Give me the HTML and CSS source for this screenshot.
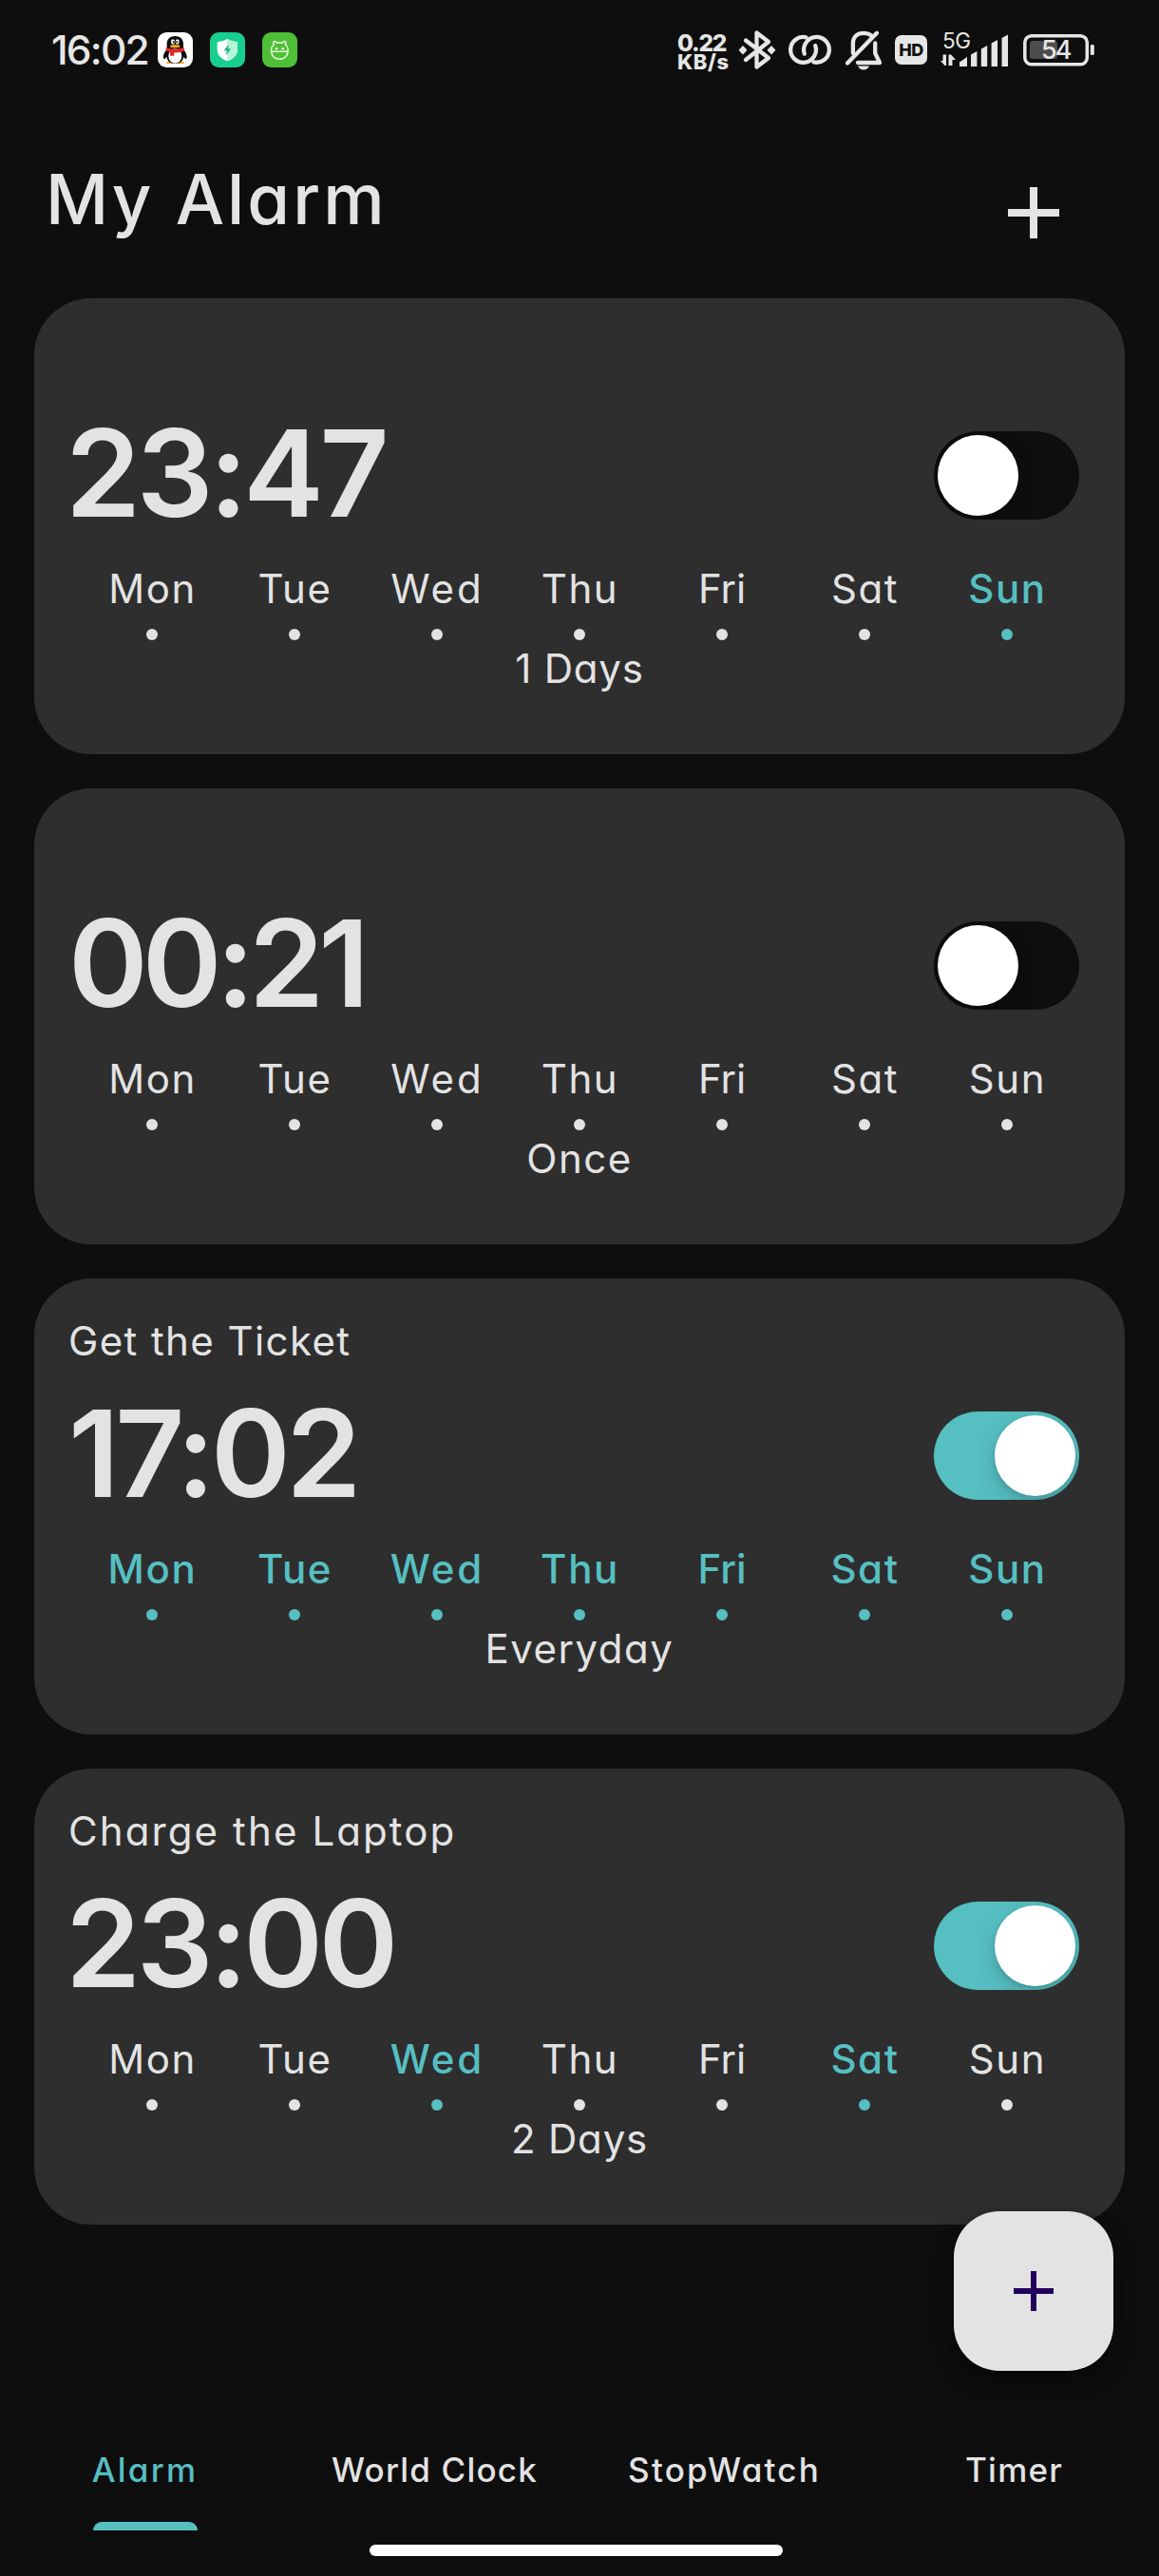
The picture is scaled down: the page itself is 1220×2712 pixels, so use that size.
FILE: index.html
```html
<!DOCTYPE html>
<html lang="en">
<head>
<meta charset="utf-8">
<title>My Alarm</title>
<link rel="stylesheet" href="styles.css">
</head>
<body>
<div class="screen">
  <div class="status">
    <span class="status-time">16:02</span>
    <svg class="app-icon" viewBox="0 0 111 111">
      <rect width="111" height="111" rx="28" fill="#fff"/>
      <path d="M27 95q8-8 24-3l3 7H28zM83 95q-8-8-24-3l-3 7h27z" fill="#f5a623"/>
      <path d="M29 54C18 66 15 80 20 84c3 1 6-4 8-7 2 14 12 22 27 22s25-8 27-22c2 3 5 8 8 7 5-4 2-18-9-30V38C81 20 70 12 55 12S29 20 29 38z" fill="#0b0b0b"/>
      <ellipse cx="55" cy="75" rx="21" ry="23" fill="#fff"/>
      <ellipse cx="48" cy="30" rx="6" ry="8" fill="#fff"/><ellipse cx="62" cy="30" rx="6" ry="8" fill="#fff"/>
      <circle cx="50" cy="31" r="3"/><circle cx="61" cy="31" r="3"/>
      <ellipse cx="55" cy="44" rx="16" ry="5" fill="#f5a623"/>
      <path d="M26 47q29 11 57 0l1 12q-13 6-32 5v10H39V62q-8-1-13-4z" fill="#e02b2b"/>
    </svg>
    <svg class="app-icon" viewBox="0 0 111 111">
      <rect width="111" height="111" rx="28" fill="#19cf90"/>
      <path d="M55 21q16 10 32 10v24c0 19-15 30-32 36-17-6-32-17-32-36V31q16 0 32-10z" fill="#fff"/>
      <path d="M55 21q16 10 32 10v24c0 19-15 30-32 36z" fill="#b5f5d8"/>
      <path d="M59 38 44 58h9l-2 15 15-21h-9z" fill="#19b582"/>
    </svg>
    <svg class="app-icon" viewBox="0 0 111 111">
      <rect width="111" height="111" rx="28" fill="#4fbf38"/>
      <g fill="none" stroke="#e6ffd8" stroke-width="4.5" stroke-linecap="round" stroke-linejoin="round">
        <path d="M29 61q-2-14 8-22-4-7 1-10 5-1 8 5 9-3 18 0 3-6 8-5 5 3 1 10 10 8 8 22a26 24 0 0 1-52 0zM29 61h52"/>
      </g>
      <rect x="41" y="48" width="8" height="7" rx="2" fill="#e6ffd8"/><rect x="61" y="48" width="8" height="7" rx="2" fill="#e6ffd8"/>
    </svg>
    <div class="status-right">
      <div class="speed"><span class="speed-value">0.22</span><span class="speed-unit">KB/s</span></div>
      <svg class="bluetooth" width="38" height="42" viewBox="0 0 38 42">
        <path class="line" d="M7 11.5 31 30 18.5 39.5V3.5L31 13 7 32"/>
        <path class="solid" d="M4 18 7.5 21.7 4 25.4.5 21.7zM34 18l3.5 3.7-3.5 3.7-3.5-3.7z" stroke="#e6e6e6" stroke-width="1.5" stroke-linejoin="round"/>
      </svg>
      <svg class="link" width="45" height="42" viewBox="0 0 45 42">
        <path class="line" d="M18.5 8.3A13.4 13.4 0 1 0 28.2 17"/>
        <path class="line" d="M26.5 34.4A13.4 13.4 0 1 0 16.8 25.6"/>
      </svg>
      <svg class="bell" width="38" height="42" viewBox="0 0 38 42">
        <path class="line" d="M2 35.5 33 3.8M7.9 25V14.500C8 7 13 3.800 19 3.800c4 0 6.500 1 8.500 3M31.200 14.500v10.500l4.800 10H13"/>
        <path class="solid" d="M13 38.500h12q-2 4-6 4t-6-4z"/>
      </svg>
      <span class="hd">HD</span>
      <svg class="signal" width="72" height="42" viewBox="0 0 72 42">
        <text class="net" x="3" y="19.700">5G</text>
        <path class="solid" d="M3.500 26.500h3.500V38H5.500L1 33h2.500zM9.500 38V26.500H12L17 32h-3.500v6zM21 34.500l8-5.500v10h-8zM33 26.500l6.400-3.500v16H33zM43.800 20.500l6.400-3.500v22h-6.400zM54.600 14.500 61 11v28h-6.400zM65.500 9 72 5.500V39h-6.500z"/>
      </svg>
      <svg class="battery" width="75" height="42" viewBox="0 0 75 42">
        <rect x="1.800" y="6.800" width="65.500" height="30" rx="7" fill="none" stroke="#e6e6e6" stroke-width="3.500"/>
        <rect x="7" y="12" width="29" height="19" rx="3" fill="#4d4d4d"/>
        <rect class="solid" x="70.800" y="16" width="4" height="11" rx="1.500"/>
        <text class="level" x="19" y="31.300">54</text>
      </svg>
    </div>
  </div>

  <header class="header">
    <h1>My Alarm</h1>
    <svg class="add" width="54" height="54" viewBox="0 0 54 54"><path d="M27 0v54M0 27h54" stroke="#e3e3e3" stroke-width="8"/></svg>
  </header>

  <main class="list">
    <section class="card">
      <div class="label"></div>
      <div class="row"><div class="time outdent">23:47</div><div class="toggle"></div></div>
      <ul class="days"><li>Mon</li><li>Tue</li><li class="wide">Wed</li><li>Thu</li><li class="narrow">Fri</li><li>Sat</li><li class="on">Sun</li></ul>
      <div class="summary">1 Days</div>
    </section>
    <section class="card">
      <div class="label"></div>
      <div class="row"><div class="time tight">00:21</div><div class="toggle"></div></div>
      <ul class="days"><li>Mon</li><li>Tue</li><li class="wide">Wed</li><li>Thu</li><li class="narrow">Fri</li><li>Sat</li><li>Sun</li></ul>
      <div class="summary loose">Once</div>
    </section>
    <section class="card">
      <div class="label">Get the Ticket</div>
      <div class="row"><div class="time">17:02</div><div class="toggle checked"></div></div>
      <ul class="days"><li class="on">Mon</li><li class="on">Tue</li><li class="on wide">Wed</li><li class="on">Thu</li><li class="on narrow">Fri</li><li class="on">Sat</li><li class="on">Sun</li></ul>
      <div class="summary loose">Everyday</div>
    </section>
    <section class="card">
      <div class="label loose">Charge the Laptop</div>
      <div class="row"><div class="time outdent">23:00</div><div class="toggle checked"></div></div>
      <ul class="days"><li>Mon</li><li>Tue</li><li class="on wide">Wed</li><li>Thu</li><li class="narrow">Fri</li><li class="on">Sat</li><li>Sun</li></ul>
      <div class="summary">2 Days</div>
    </section>
  </main>

  <button class="fab" aria-label="Add alarm"><svg width="42" height="42" viewBox="0 0 42 42"><path d="M21 0v42M0 21h42" stroke="#21005d" stroke-width="6"/></svg></button>

  <nav class="tabs">
    <a class="tab active"><span class="loose">Alarm</span></a>
    <a class="tab"><span>World Clock</span></a>
    <a class="tab"><span class="loose">StopWatch</span></a>
    <a class="tab"><span>Timer</span></a>
  </nav>
  <div class="home-bar"></div>
</div>
</body>
</html>
```
FILE: styles.css
```css
* { box-sizing: border-box; }
body { margin: 0; background: #0e0e0e; color: #e3e3e3; font-family: Inter, "Liberation Sans", sans-serif; font-feature-settings: "cv11", "calt" 0; }
svg { display: block; flex: none; overflow: visible; }

.screen { position: relative; width: 1220px; height: 2712px; display: flex; flex-direction: column; overflow: hidden; }

/* Status bar */
.status { height: 104px; padding: 0 68px 0 54px; display: flex; align-items: center; color: #e6e6e6; }
.status-time { width: 112px; font-size: 42.500px; font-weight: 500; letter-spacing: -1.800px; line-height: 60px; padding-top: 2px; }
.app-icon { width: 37px; height: 37px; margin-right: 18px; }
.status-right { margin-left: auto; display: flex; align-items: center; }
.speed { width: 53px; padding-top: 6px; display: flex; flex-direction: column; font-weight: 800; white-space: nowrap; }
.speed-value { font-size: 24.500px; line-height: 20px; letter-spacing: -1.200px; }
.speed-unit { font-size: 22px; line-height: 20px; letter-spacing: .6px; }
.line { fill: none; stroke: #e6e6e6; stroke-width: 4.300; stroke-linecap: round; stroke-linejoin: round; }
.solid { fill: #e6e6e6; }
.bluetooth { margin-left: 12px; }
.link { margin-left: 14px; }
.bell { margin-left: 15px; }
.hd { width: 34px; height: 31px; margin-left: 14px; border-radius: 7px; background: #e6e6e6; color: #0e0e0e; font-size: 18px; font-weight: 800; line-height: 31px; text-align: center; letter-spacing: -.5px; }
.signal { margin-left: 13px; }
.battery { margin-left: 16px; }
.net { font-size: 22.500px; fill: #e6e6e6; letter-spacing: -.5px; }
.level { font-size: 27px; font-weight: 500; fill: #e6e6e6; letter-spacing: -2px; }

/* Header */
.header { height: 210px; padding: 54px 105px 0 48px; display: flex; justify-content: space-between; align-items: flex-start; }
.header h1 { margin: 0; font-size: 72.500px; font-weight: 500; line-height: 104px; letter-spacing: 3px; }
.add { margin-top: 39px; }

/* Alarm cards */
.list { display: flex; flex-direction: column; gap: 36px; padding: 0 36px; }
.card { height: 480px; padding: 36px 48px 0 36px; border-radius: 60px; background: #2e2e2e; font-size: 42px; }
.label { height: 60px; line-height: 60px; letter-spacing: 1.400px; }
.label.loose { letter-spacing: 2.100px; }
.row { height: 97px; margin-top: 40px; display: flex; justify-content: space-between; align-items: flex-end; }
.time { font-size: 127px; font-weight: 600; line-height: 97px; letter-spacing: -4.400px; }
.time.tight { letter-spacing: -6px; }
.time.outdent { margin-left: -3px; }
.toggle { width: 153px; height: 93px; padding: 4px; border-radius: 47px; background: #0e0e0e; display: flex; overflow: hidden; }
.toggle::before { content: ""; width: 85px; height: 85px; border-radius: 50%; background: #fff; box-shadow: 0 9px 24px rgba(0, 0, 0, .15), 0 3px 6px rgba(0, 0, 0, .12); }
.toggle.checked { background: #56bfc2; justify-content: flex-end; }
.days { width: 1050px; height: 84px; margin: 43px 0 0 13px; padding: 0; list-style: none; display: grid; grid-template-columns: repeat(7, 150px); }
.days li { display: flex; flex-direction: column; align-items: center; line-height: 60px; letter-spacing: 1.600px; text-indent: 1px; }
.days li::after { content: ""; width: 12px; height: 12px; margin-top: 12px; border-radius: 50%; background: currentColor; }
.days .wide { letter-spacing: 3px; }
.days .narrow { letter-spacing: 0; text-indent: 0; }
.days .on { color: #56bfc2; font-weight: 500; }
.summary { width: 1076px; height: 60px; line-height: 60px; text-align: center; letter-spacing: .8px; }
.summary.loose { letter-spacing: 1.500px; }

/* Floating action button */
.fab { position: absolute; right: 48px; top: 2328px; width: 168px; height: 168px; padding: 0; border: 0; border-radius: 48px; background: #e3e3e3; display: flex; align-items: center; justify-content: center; box-shadow: 0 10px 24px rgba(0, 0, 0, .35), 0 3px 8px rgba(0, 0, 0, .3); }

/* Bottom tabs */
.tabs { height: 128px; margin-top: auto; display: grid; grid-template-columns: repeat(4, 305px); font-size: 35px; font-weight: 500; }
.tab { display: flex; flex-direction: column; align-items: center; padding-top: 9px; line-height: 110px; letter-spacing: 1.200px; white-space: nowrap; }
.tab .loose { letter-spacing: 2.200px; }
.active { color: #56bfc2; }
.active::after { content: ""; width: 110px; height: 9px; border-radius: 9px 9px 0 0; background: #56bfc2; }

.home-bar { width: 435px; height: 12px; margin: 15px 0 21px 389px; border-radius: 6px; background: #fff; flex: none; }
```
